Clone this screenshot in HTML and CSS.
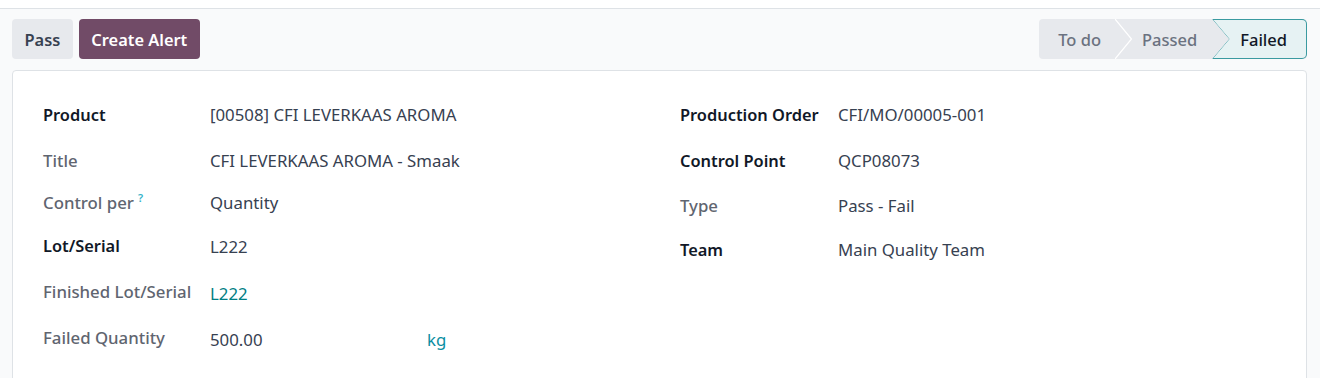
FILE: index.html
```html
<!DOCTYPE html>
<html lang="en">
<head>
  <meta charset="UTF-8">
  <title>Quality Check</title>
  <link rel="stylesheet" href="styles.css">
</head>
<body>

  <div class="topbar"></div>

  <div class="content">
    <div class="control-bar">
      <div class="actions">
        <button class="btn btn-light">Pass</button>
        <button class="btn btn-primary">Create Alert</button>
      </div>

      <div class="statusbar">
        <div class="stage">To do</div>
        <svg class="stage-sep" width="18" height="40" viewBox="0 0 18 40">
          <polyline points="0,0 16.5,20 0,40" fill="none" stroke="#ffffff" stroke-width="1.2"/>
        </svg>
        <div class="stage stage-passed">Passed</div>
        <div class="stage-current">
          <div class="stage-current-inner">Failed</div>
        </div>
      </div>
    </div>

    <div class="sheet">
      <div class="group group-left">
        <div class="row">
          <div class="label label-strong">Product</div>
          <div class="value">[00508] CFI LEVERKAAS AROMA</div>
        </div>
        <div class="row">
          <div class="label">Title</div>
          <div class="value">CFI LEVERKAAS AROMA - Smaak</div>
        </div>
        <div class="row">
          <div class="label">Control per<sup class="help">?</sup></div>
          <div class="value">Quantity</div>
        </div>
        <div class="row">
          <div class="label label-strong">Lot/Serial</div>
          <div class="value value-input">L222</div>
        </div>
        <div class="row">
          <div class="label">Finished Lot/Serial</div>
          <div class="value value-input link">L222</div>
        </div>
        <div class="row">
          <div class="label">Failed Quantity</div>
          <div class="value value-input qty">
            <span class="qty-num">500.00</span>
            <span class="uom">kg</span>
          </div>
        </div>
      </div>

      <div class="group group-right">
        <div class="row">
          <div class="label label-strong">Production Order</div>
          <div class="value">CFI/MO/00005-001</div>
        </div>
        <div class="row">
          <div class="label label-strong">Control Point</div>
          <div class="value">QCP08073</div>
        </div>
        <div class="row">
          <div class="label">Type</div>
          <div class="value">Pass - Fail</div>
        </div>
        <div class="row">
          <div class="label label-strong">Team</div>
          <div class="value">Main Quality Team</div>
        </div>
      </div>
    </div>
  </div>

</body>
</html>
```

FILE: styles.css
```css
body {
  margin: 0;
  font-family: 'Noto Sans', sans-serif;
  font-size: 16.8px;
  background-color: #f9fafb;
  color: #374151;
  overflow: hidden;
}

.topbar {
  height: 8px;
  background-color: #ffffff;
  border-bottom: 1px solid #dee2e6;
}

.content {
  padding: 10px 13px 0 12px;
}

.control-bar {
  display: flex;
  justify-content: space-between;
  align-items: center;
  height: 40px;
}

.actions {
  display: flex;
  gap: 6px;
}

.btn {
  height: 40px;
  border: none;
  border-radius: 4px;
  padding: 0 12.5px;
  font-family: inherit;
  font-size: 16.4px;
  font-weight: 600;
  cursor: pointer;
}

.btn-light {
  background-color: #e7e9ed;
  color: #374151;
}

.btn-primary {
  background-color: #714b67;
  color: #ffffff;
  padding: 0 12.5px;
}

/* status bar */

.statusbar {
  display: flex;
  align-items: center;
  height: 40px;
  background-color: #e7e9ed;
  border-radius: 4px;
  color: #6b7280;
  font-size: 16.5px;
  font-weight: 500;
}

.stage {
  padding-left: 19px;
  padding-right: 14px;
}

.stage-sep {
  display: block;
}

.stage-passed {
  padding-left: 9px;
  padding-right: 15px;
}

.stage-current {
  height: 40px;
  padding: 1px 1px 1px 0;
  box-sizing: border-box;
  background-color: #3a9aa0;
  border-radius: 0 5px 5px 0;
  clip-path: polygon(0 0, 100% 0, 100% 100%, 0 100%, 17px 50%);
}

.stage-current-inner {
  height: 38px;
  display: flex;
  align-items: center;
  padding: 0 19px 0 28px;
  background-color: #e6f2f3;
  border-radius: 0 4px 4px 0;
  color: #111827;
  clip-path: polygon(1.2px 0, 100% 0, 100% 100%, 1.2px 100%, 17.3px 50%);
}

/* sheet */

.sheet {
  margin-top: 11px;
  background-color: #ffffff;
  border: 1px solid #dee2e6;
  border-radius: 4px;
  padding: 21px 30px 30px 30px;
  display: grid;
  grid-template-columns: 637px 1fr;
}

.row {
  display: grid;
  align-items: center;
  height: 45px;
}

.group-left .row {
  grid-template-columns: 167px 1fr;
}

.group-left .row:nth-child(2) { height: 46px; }
.group-left .row:nth-child(3) { height: 39px; }
.group-left .row:nth-child(4) { height: 46px; }
.group-left .row:nth-child(5) { height: 47px; }

.group-right .row {
  grid-template-columns: 158px 1fr;
}

.group-right .row:nth-child(2) { height: 47px; }
.group-right .row:nth-child(3) { height: 43px; }

.label {
  color: #5f6570;
  font-weight: 500;
}

.label-strong {
  color: #111827;
  font-weight: 600;
  font-size: 16.4px;
}

.value {
  color: #374151;
}

.value-input {
  padding-top: 3px;
}

.link {
  color: #017e84;
}

.help {
  color: #35b3c9;
  font-size: 11px;
  font-weight: 600;
  margin-left: 4px;
  vertical-align: 7px;
  line-height: 0;
}

.qty {
  display: flex;
}

.qty-num {
  width: 217px;
}

.uom {
  color: #0a8ea2;
}
```
